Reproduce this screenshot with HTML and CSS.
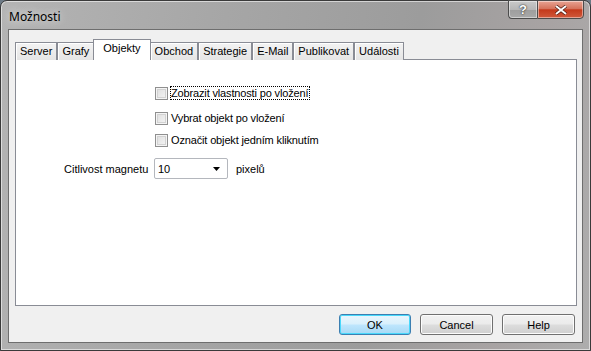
FILE: index.html
```html
<!DOCTYPE html>
<html lang="cs">
<head>
  <meta charset="UTF-8" />
  <title>Možnosti</title>
  <link rel="stylesheet" href="styles.css">
</head>
<body>

<div class="window">
  <div class="titlebar">
    <span class="title">Možnosti</span>
    <div class="caption-buttons">
      <button class="cap-btn help-cap">?</button>
      <button class="cap-btn close-cap">
        <svg width="14" height="10" viewBox="0 0 14 10">
          <path d="M2 1 L12 9 M12 1 L2 9" stroke="#4a1a10" stroke-width="3.4" />
          <path d="M2 1 L12 9 M12 1 L2 9" stroke="#fff" stroke-width="2" />
        </svg>
      </button>
    </div>
  </div>

  <div class="client">
    <div class="tabs">
      <div class="tab">Server</div>
      <div class="tab">Grafy</div>
      <div class="tab active">Objekty</div>
      <div class="tab">Obchod</div>
      <div class="tab">Strategie</div>
      <div class="tab">E-Mail</div>
      <div class="tab">Publikovat</div>
      <div class="tab">Události</div>
    </div>

    <div class="panel">
      <div class="checks">
        <label class="check first"><span class="box"></span><span class="focus">Zobrazit vlastnosti po vložení</span></label>
        <label class="check second"><span class="box"></span><span>Vybrat objekt po vložení</span></label>
        <label class="check third"><span class="box"></span><span>Označit objekt jedním kliknutím</span></label>
      </div>
      <div class="magnet-row">
        <span class="magnet-label">Citlivost magnetu</span>
        <div class="combo">
          <span>10</span>
          <svg width="7" height="4" viewBox="0 0 7 4"><path d="M0 0 H7 L3.5 4 Z" fill="#000" /></svg>
        </div>
        <span>pixelů</span>
      </div>
    </div>

    <div class="actions">
      <button class="btn default">OK</button>
      <button class="btn">Cancel</button>
      <button class="btn">Help</button>
    </div>
  </div>
</div>

</body>
</html>
```

FILE: styles.css
```css
* {
  box-sizing: border-box;
  margin: 0;
  padding: 0;
}

body {
  width: 591px;
  height: 351px;
  overflow: hidden;
  background: #6d7a86;
  font-family: 'Liberation Sans', Arial, sans-serif;
  font-size: 11px;
  color: #000;
}

.window {
  width: 591px;
  height: 351px;
  border: 1px solid #3a3a3a;
  border-radius: 7px 7px 0 0;
  background: linear-gradient(100deg, #b4b4b4 0%, #a6a6a6 35%, #9c9c9c 65%, #a8a3a3 85%, #adadad 100%);
  box-shadow: inset 0 0 0 1px rgba(255, 255, 255, 0.55);
  display: flex;
  flex-direction: column;
  padding: 0 7px 7px;
}

.titlebar {
  height: 28px;
  display: flex;
  justify-content: space-between;
  align-items: flex-start;
}

.title {
  font-family: 'Noto Sans', 'Open Sans', sans-serif;
  font-size: 12px;
  color: #000;
  margin-top: 7px;
  padding-left: 1px;
  text-shadow: 0 0 8px rgba(255, 255, 255, 0.9);
}

.caption-buttons {
  display: flex;
  margin-right: -1px;
  margin-top: -1px;
}

.cap-btn {
  height: 19px;
  border: 1px solid #4c4c4c;
  font-family: 'Liberation Sans', Arial, sans-serif;
  display: flex;
  align-items: center;
  justify-content: center;
  box-shadow: inset 0 0 0 1px rgba(255, 255, 255, 0.45);
}

.help-cap {
  width: 29px;
  border-radius: 0 0 0 4px;
  border-right: none;
  background: linear-gradient(#c9c9c9 0%, #b6b6b6 50%, #9d9d9d 51%, #a9a9a9 100%);
  color: #fff;
  font-weight: bold;
  font-size: 13px;
  text-shadow: 0 0 2px #333, 0 0 1px #333;
}

.close-cap {
  width: 47px;
  border-radius: 0 0 4px 0;
  background: linear-gradient(#e8a493 0%, #d5735b 45%, #c4391b 52%, #d0593b 100%);
}

.client {
  flex: 1;
  background: #f0f0f0;
  border: 1px solid #6e6e6e;
  padding: 9px 6px 0 6px;
  display: flex;
  flex-direction: column;
}

.tabs {
  display: flex;
  align-items: flex-end;
  height: 21px;
  position: relative;
  z-index: 1;
  margin-bottom: -1px;
}

.tab {
  height: 18px;
  padding: 0 4px;
  border: 1px solid #898c95;
  border-bottom: none;
  background: linear-gradient(#f3f3f3, #e5e5e5);
  box-shadow: inset 1px 1px 0 #fff;
  line-height: 17px;
  white-space: nowrap;
}

.tab.active {
  height: 21px;
  background: #fff;
  box-shadow: none;
  margin: 0 -1px;
  padding: 0 9px;
  line-height: 16px;
  position: relative;
}

.panel {
  width: 562px;
  height: 247px;
  background: #fff;
  border: 1px solid #898c95;
}

.checks {
  display: flex;
  flex-direction: column;
  margin-left: 139px;
  padding-top: 26px;
  letter-spacing: -0.15px;
}

.check {
  display: flex;
  align-items: center;
  gap: 3px;
  height: 14px;
}

.check.second {
  margin-top: 11px;
}

.check.third {
  margin-top: 8px;
}

.box {
  width: 13px;
  height: 13px;
  border: 1px solid #8f8f8f;
  background: linear-gradient(135deg, #dcdcdc, #f6f6f6);
  box-shadow: inset 0 0 0 1px #f4f4f4, inset 0 0 0 2px #d2d2d2;
}

.focus {
  outline: 1px dotted #000;
  padding: 0 1px 0 0;
}

.magnet-row {
  display: flex;
  align-items: center;
  margin-top: 11px;
  padding-left: 48px;
}

.magnet-label {
  width: 90px;
}

.combo {
  width: 74px;
  height: 21px;
  border: 1px solid #b4b7bd;
  border-radius: 2px;
  background: #fff;
  display: flex;
  align-items: center;
  justify-content: space-between;
  padding: 0 7px 0 3px;
  margin-right: 8px;
}

.actions {
  display: flex;
  justify-content: flex-end;
  gap: 9px;
  margin-top: 8px;
  padding-right: 1px;
}

.btn {
  width: 73px;
  height: 21px;
  border: 1px solid #707070;
  border-radius: 3px;
  background: linear-gradient(#f2f2f2 0%, #ebebeb 48%, #dddddd 52%, #cfcfcf 100%);
  box-shadow: inset 0 0 0 1px #fcfcfc;
  font-family: 'Liberation Sans', Arial, sans-serif;
  font-size: 11px;
  color: #000;
}

.btn.default {
  width: 72px;
  border-color: #3c7fb1;
  background: linear-gradient(#eaf6fd 0%, #d9f0fc 48%, #bee6fd 52%, #a7d9f5 100%);
  box-shadow: inset 0 0 0 1px #48d8fb;
}
```
